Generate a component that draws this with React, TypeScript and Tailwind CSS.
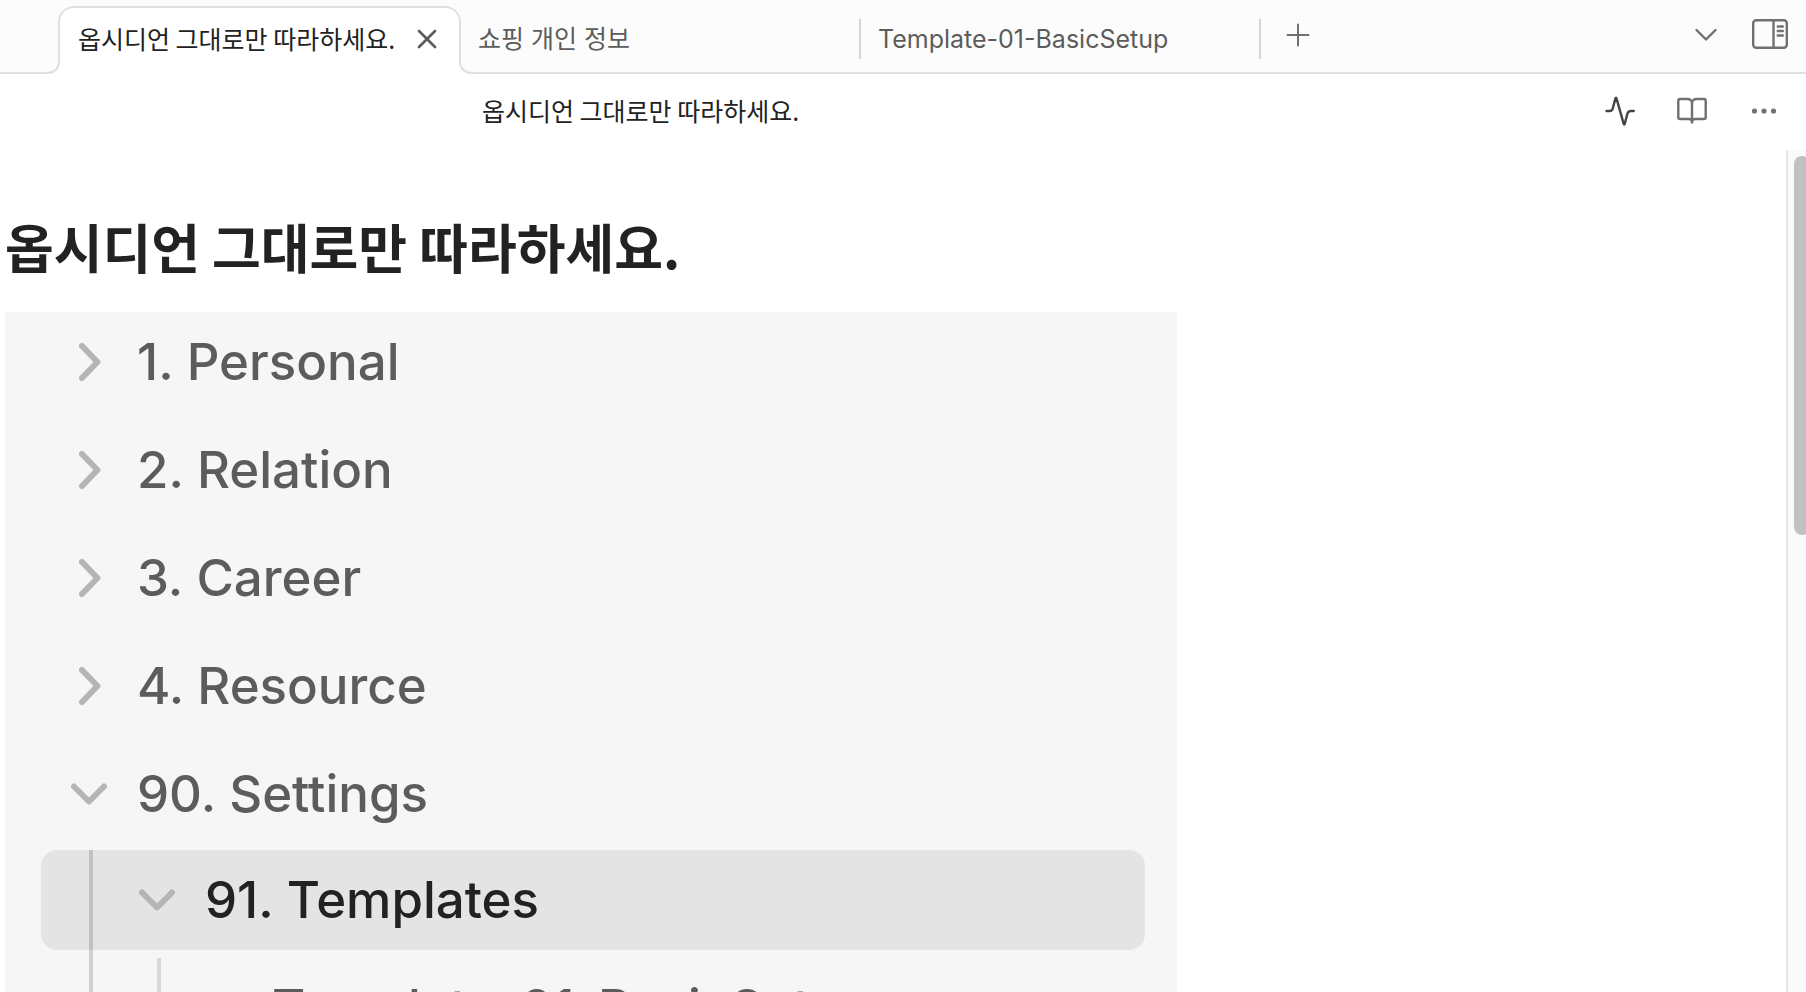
import React from "react";
import { Plus, X } from "lucide-react";

const NOTE_TITLE = "옵시디언 그대로만 따라하세요.";

function ActiveTab({ title }: { title: string }) {
  return (
    <div className="relative z-10 -mb-[2px] ml-[58px] flex h-[68px] w-[403px] shrink-0 items-center justify-between self-end rounded-t-[16px] border-2 border-b-0 border-[#e0e0e0] bg-white pr-[16px] pb-[5px] pl-[18px]">
      <span className="absolute bottom-0 -left-[12px] h-[12px] w-[12px] bg-white">
        <span className="block h-[12px] w-[12px] rounded-br-[12px] border-r-2 border-b-2 border-[#e0e0e0] bg-[#fcfcfc]" />
      </span>
      <span className="absolute -right-[12px] bottom-0 h-[12px] w-[12px] bg-white">
        <span className="block h-[12px] w-[12px] rounded-bl-[12px] border-b-2 border-l-2 border-[#e0e0e0] bg-[#fcfcfc]" />
      </span>
      <button type="button" role="tab" aria-selected="true" className="pb-[2px] font-['Noto_Sans_CJK_KR',sans-serif] whitespace-nowrap text-[#222222]">
        {title}
      </button>
      <button type="button" aria-label="닫기" className="text-[#5c5c5c]">
        <X size={32} strokeWidth={2} />
      </button>
    </div>
  );
}

function InactiveTab({ title }: { title: string }) {
  return (
    <div className="flex w-[400px] shrink-0 items-center pt-[6px]">
      <button
        type="button"
        role="tab"
        aria-selected="false"
        className="h-[40px] w-full border-r-2 border-[#d4d4d4] pl-[17px] text-left whitespace-nowrap text-[#5c5c5c]"
      >
        {title}
      </button>
    </div>
  );
}

function ChevronRightIcon() {
  return (
    <svg viewBox="0 0 40 40" className="h-[40px] w-[40px] shrink-0" fill="none" stroke="#b5b5b5" strokeWidth="6" strokeLinecap="round" strokeLinejoin="round" aria-hidden="true">
      <path d="M13 4 L28.500 20 L13 36" />
    </svg>
  );
}

function ChevronDownIcon() {
  return (
    <svg viewBox="0 0 40 40" className="h-[40px] w-[40px] shrink-0" fill="none" stroke="#b5b5b5" strokeWidth="6" strokeLinecap="round" strokeLinejoin="round" aria-hidden="true">
      <path d="M5 12.500 L20 27.500 L35 12.500" />
    </svg>
  );
}

function Folder({ name, open = false }: { name: string; open?: boolean }) {
  return (
    <button type="button" aria-expanded={open} className="flex h-[100px] w-full items-center gap-[28px] pl-[28px] text-left text-[#5c5c5c]">
      {open ? <ChevronDownIcon /> : <ChevronRightIcon />}
      {name}
    </button>
  );
}

function FileTree() {
  return (
    <div className="bg-[#f6f6f6] pr-[32px] pl-[36px] text-[51px] leading-[60px] font-medium">
      <ul className="flex flex-col gap-[8px]">
        <li><Folder name="1. Personal" /></li>
        <li><Folder name="2. Relation" /></li>
        <li><Folder name="3. Career" /></li>
        <li><Folder name="4. Resource" /></li>
        <li>
          <Folder name="90. Settings" open />
          <ul className="relative mt-[6px]">
            <li>
              <button type="button" aria-expanded="true" className="flex h-[100px] w-full items-center gap-[28px] rounded-[16px] bg-[#e4e4e4] pl-[96px] text-left text-[#222222]">
                <ChevronDownIcon />
                91. Templates
              </button>
              <ul className="relative mt-[8px]">
                <li>
                  <button type="button" className="flex h-[100px] w-full items-center pl-[231px] text-left text-[#5c5c5c]">
                    Template-01-BasicSetup
                  </button>
                </li>
                <li className="absolute inset-y-0 left-[116px] w-[4px] bg-[#d9d9d9]" aria-hidden="true" />
              </ul>
            </li>
            <li className="absolute inset-y-0 left-[48px] w-[4px] bg-black/15" aria-hidden="true" />
          </ul>
        </li>
      </ul>
    </div>
  );
}

export default function App() {
  return (
    <div className="flex h-screen flex-col overflow-hidden bg-white font-['Inter','Noto_Sans_CJK_KR',sans-serif] text-[25px] leading-[36px] text-[#222222]">
      <header className="flex h-[74px] shrink-0 border-b-2 border-[#e0e0e0] bg-[#fcfcfc]">
        <div role="tablist" className="flex">
          <ActiveTab title={NOTE_TITLE} />
          <InactiveTab title="쇼핑 개인 정보" />
          <InactiveTab title="Template-01-BasicSetup" />
        </div>
        <button type="button" aria-label="새 탭" className="ml-[19px] self-center pb-[2px] text-[#707070]">
          <Plus size={36} strokeWidth={2} absoluteStrokeWidth />
        </button>
        <div className="ml-auto flex items-center gap-[31px] pr-[17px] pb-[4px]">
          <button type="button" aria-label="탭 목록">
            <svg viewBox="0 0 28 28" className="h-[28px] w-[28px]" fill="none" stroke="#707070" strokeWidth="2.4" strokeLinecap="round" strokeLinejoin="round">
              <path d="M4.500 10 L14 19.500 L23.500 10" />
            </svg>
          </button>
          <button type="button" aria-label="오른쪽 사이드바">
            <svg viewBox="0 0 38 32" className="h-[32px] w-[38px]" fill="none" stroke="#707070" strokeWidth="2.4" strokeLinecap="round">
              <rect x="2.200" y="2.200" width="33.600" height="27.600" rx="3" />
              <path d="M22.500 2.500 V29.500 M26.800 8.500 H31.800 M26.800 13 H31.800 M26.800 17.500 H31.800" />
            </svg>
          </button>
        </div>
      </header>

      <div className="flex h-[76px] shrink-0 items-center justify-between pr-[26px] pb-[2px] pl-[482px]">
        <span className="pb-[2px] font-['Noto_Sans_CJK_KR',sans-serif] whitespace-nowrap">{NOTE_TITLE}</span>
        <div className="flex items-center gap-[40px]">
          <button type="button" aria-label="활동">
            <svg viewBox="0 0 32 32" className="h-[32px] w-[32px]" fill="none" stroke="#444444" strokeWidth="2.4" strokeLinecap="round" strokeLinejoin="round">
              <path d="M2.500 16 H5.500 C7.600 16 8.300 15 8.800 13.300 L11.400 3.600 C11.700 2.400 12.300 2.400 12.600 3.600 L19.600 28.600 C19.900 29.800 20.500 29.800 20.800 28.600 L23.400 18.800 C23.900 17 24.600 16 26.700 16 H29.700" />
            </svg>
          </button>
          <button type="button" aria-label="읽기 보기">
            <svg viewBox="0 0 32 32" className="h-[32px] w-[32px]" fill="none" stroke="#707070" strokeWidth="2.4" strokeLinecap="round" strokeLinejoin="round">
              <path d="M16 8 C16 5.500 14 4 11.500 4 H4 C3 4 2.300 4.700 2.300 5.700 V22.300 C2.300 23.300 3 24 4 24 H13 C15 24 16 25.500 16 27.500 C16 25.500 17 24 19 24 H28 C29 24 29.700 23.300 29.700 22.300 V5.700 C29.700 4.700 29 4 28 4 H20.500 C18 4 16 5.500 16 8 Z M16 8 V27" />
            </svg>
          </button>
          <button type="button" aria-label="더 보기">
            <svg viewBox="0 0 32 32" className="h-[32px] w-[32px]" fill="#707070">
              <circle cx="6.500" cy="16" r="2.600" />
              <circle cx="16" cy="16" r="2.600" />
              <circle cx="25.500" cy="16" r="2.600" />
            </svg>
          </button>
        </div>
      </div>

      <div className="flex min-h-0 flex-1">
        <main className="min-w-0 flex-1 overflow-hidden pl-[5px]">
          <article className="max-w-[1172px]">
            <h1 className="pt-[56px] pb-[26px] font-['Noto_Sans_CJK_KR',sans-serif] text-[53px] leading-[80px] font-bold whitespace-nowrap">{NOTE_TITLE}</h1>
            <FileTree />
          </article>
        </main>
        <div className="w-[20px] shrink-0 overflow-hidden border-l-2 border-[#e6e6e6] bg-[#fafafa] pt-[6px] pl-[6px]" aria-hidden="true">
          <div className="h-[379px] w-[16px] rounded-[8px] bg-[#c1c1c1]" />
        </div>
      </div>
    </div>
  );
}
